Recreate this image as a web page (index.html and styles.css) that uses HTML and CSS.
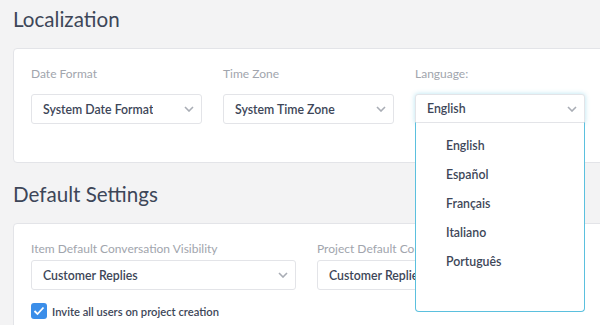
FILE: index.html
```html
<!DOCTYPE html>
<html lang="en">
<head>
  <meta charset="UTF-8" />
  <title>Settings</title>
  <link rel="stylesheet" href="styles.css">
</head>
<body>
  <div class="page">
    <h2 class="section-title">Localization</h2>
    <div class="card card-loc">
      <div class="row">
        <div class="field w171">
          <label class="field-label">Date Format</label>
          <div class="select">
            <span>System Date Format</span>
            <svg class="chevron" width="10" height="6" viewBox="0 0 10 6"><path d="M1 1l4 4 4-4" fill="none" stroke="#a9adb5" stroke-width="1.6"/></svg>
          </div>
        </div>
        <div class="field w171">
          <label class="field-label">Time Zone</label>
          <div class="select">
            <span>System Time Zone</span>
            <svg class="chevron" width="10" height="6" viewBox="0 0 10 6"><path d="M1 1l4 4 4-4" fill="none" stroke="#a9adb5" stroke-width="1.6"/></svg>
          </div>
        </div>
        <div class="field w170">
          <label class="field-label">Language:</label>
          <div class="select select-open">
            <span>English</span>
            <svg class="chevron" width="10" height="6" viewBox="0 0 10 6"><path d="M1 1l4 4 4-4" fill="none" stroke="#a9adb5" stroke-width="1.6"/></svg>
            <ul class="menu">
              <li>English</li>
              <li>Español</li>
              <li>Français</li>
              <li>Italiano</li>
              <li>Português</li>
            </ul>
          </div>
        </div>
      </div>
    </div>

    <h2 class="section-title second">Default Settings</h2>
    <div class="card card-def">
      <div class="row">
        <div class="field w265">
          <label class="field-label">Item Default Conversation Visibility</label>
          <div class="select">
            <span>Customer Replies</span>
            <svg class="chevron" width="10" height="6" viewBox="0 0 10 6"><path d="M1 1l4 4 4-4" fill="none" stroke="#a9adb5" stroke-width="1.6"/></svg>
          </div>
        </div>
        <div class="field w265">
          <label class="field-label">Project Default Conversation Visibility</label>
          <div class="select">
            <span>Customer Replies</span>
            <svg class="chevron" width="10" height="6" viewBox="0 0 10 6"><path d="M1 1l4 4 4-4" fill="none" stroke="#a9adb5" stroke-width="1.6"/></svg>
          </div>
        </div>
      </div>
      <div class="check-row">
        <span class="checkbox">
          <svg width="12" height="10" viewBox="0 0 12 10"><path d="M1.5 5l3 3 6-6.5" fill="none" stroke="#fff" stroke-width="1.8"/></svg>
        </span>
        <span class="check-label">Invite all users on project creation</span>
      </div>
    </div>
  </div>
</body>
</html>
```

FILE: styles.css
```css
* {
  margin: 0;
  padding: 0;
  box-sizing: border-box;
}

body {
  font-family: 'Lato', 'Liberation Sans', sans-serif;
  background: #f3f3f4;
  color: #3d4658;
  overflow: hidden;
}

.page {
  padding-left: 13px;
  width: 640px;
}

.section-title {
  font-size: 20.6px;
  font-weight: 400;
  line-height: 28px;
  margin-top: 5px;
  margin-bottom: 15px;
  color: #3d4658;
}

.section-title.second {
  margin-top: 17px;
}

.card {
  background: #fff;
  border: 1px solid #e3e4e8;
  border-radius: 4px;
  padding: 17px 17px 0;
}

.card-loc {
  height: 115px;
}

.card-def {
  height: 120px;
}

.row {
  display: flex;
  gap: 21px;
}

.field-label {
  display: block;
  font-size: 12px;
  line-height: 16px;
  color: #a1a5ad;
}

.card-loc .field-label {
  margin-bottom: 12px;
}

.card-def .field-label {
  margin-bottom: 3px;
}

.w171 { width: 171px; }
.w170 { width: 170px; }
.w265 { width: 265px; }

.select {
  position: relative;
  height: 30px;
  border: 1px solid #e3e4e8;
  border-radius: 3px;
  background: #fff;
  display: flex;
  align-items: center;
  justify-content: space-between;
  padding: 0 7px 0 11px;
  font-family: 'Lato Semibold', 'Lato', sans-serif;
  font-size: 12.3px;
  white-space: nowrap;
  overflow: visible;
}

.select span {
  overflow: hidden;
}

.chevron {
  flex-shrink: 0;
}

.select-open {
  height: 29px;
  border-color: #e3e4e8;
  box-shadow: 0 0 5px rgba(91, 192, 222, 0.45);
  border-radius: 3px 3px 0 0;
}

.menu {
  position: absolute;
  left: -1px;
  right: -1px;
  top: 27px;
  height: 190px;
  list-style: none;
  background: #fff;
  border: 1px solid #5bc0de;
  border-top-color: #e3e4e8;
  border-radius: 0 0 4px 4px;
  padding-top: 8px;
  z-index: 5;
}

.menu li {
  padding-left: 30px;
  height: 29px;
  line-height: 29px;
  font-size: 12.3px;
  color: #3d4658;
}

.check-row {
  display: flex;
  align-items: center;
  gap: 5px;
  margin-top: 13px;
}

.checkbox {
  width: 16px;
  height: 16px;
  border-radius: 3px;
  background: #3b8ee9;
  display: flex;
  align-items: center;
  justify-content: center;
}

.check-label {
  font-family: 'Lato Semibold', 'Lato', sans-serif;
  font-size: 11.2px;
}
```
